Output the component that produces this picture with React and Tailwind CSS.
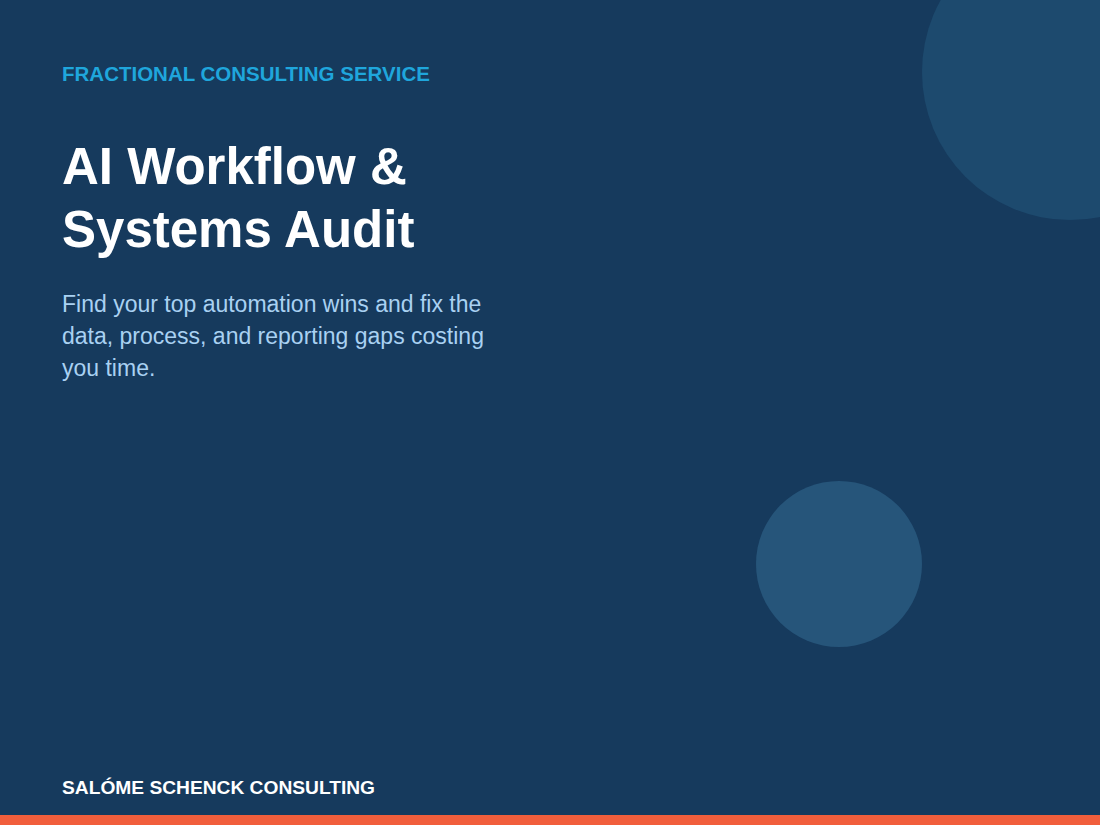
export default function App() {
  return (
    <div className="relative w-[1100px] h-[825px] overflow-hidden bg-[#163a5d] flex flex-col" style={{ fontFamily: '"Liberation Sans", Arial, sans-serif' }}>
      <div className="absolute left-[922px] top-[-76px] w-[296px] h-[296px] rounded-full bg-[#1d4a6e]" />
      <div className="absolute left-[756px] top-[481px] w-[166px] h-[166px] rounded-full bg-[#26557a]" />
      <div className="relative flex-1 flex flex-col px-[62px] pt-[61px]">
        <div className="text-[20.5px] leading-[25px] font-bold text-[#1fa6dc]">FRACTIONAL CONSULTING SERVICE</div>
        <h1 className="mt-[49px] text-[51px] leading-[63px] font-bold text-white">AI Workflow &amp;<br />Systems Audit</h1>
        <p className="mt-[27px] w-[440px] text-[23px] leading-[32px] text-[#a9d1f2]">Find your top automation wins and fix the data, process, and reporting gaps costing you time.</p>
        <div className="mt-auto mb-[15px] text-[19.2px] leading-[24px] font-bold text-white">SALÓME SCHENCK CONSULTING</div>
      </div>
      <div className="h-[10px] bg-[#f15e3c]" />
    </div>
  );
}
